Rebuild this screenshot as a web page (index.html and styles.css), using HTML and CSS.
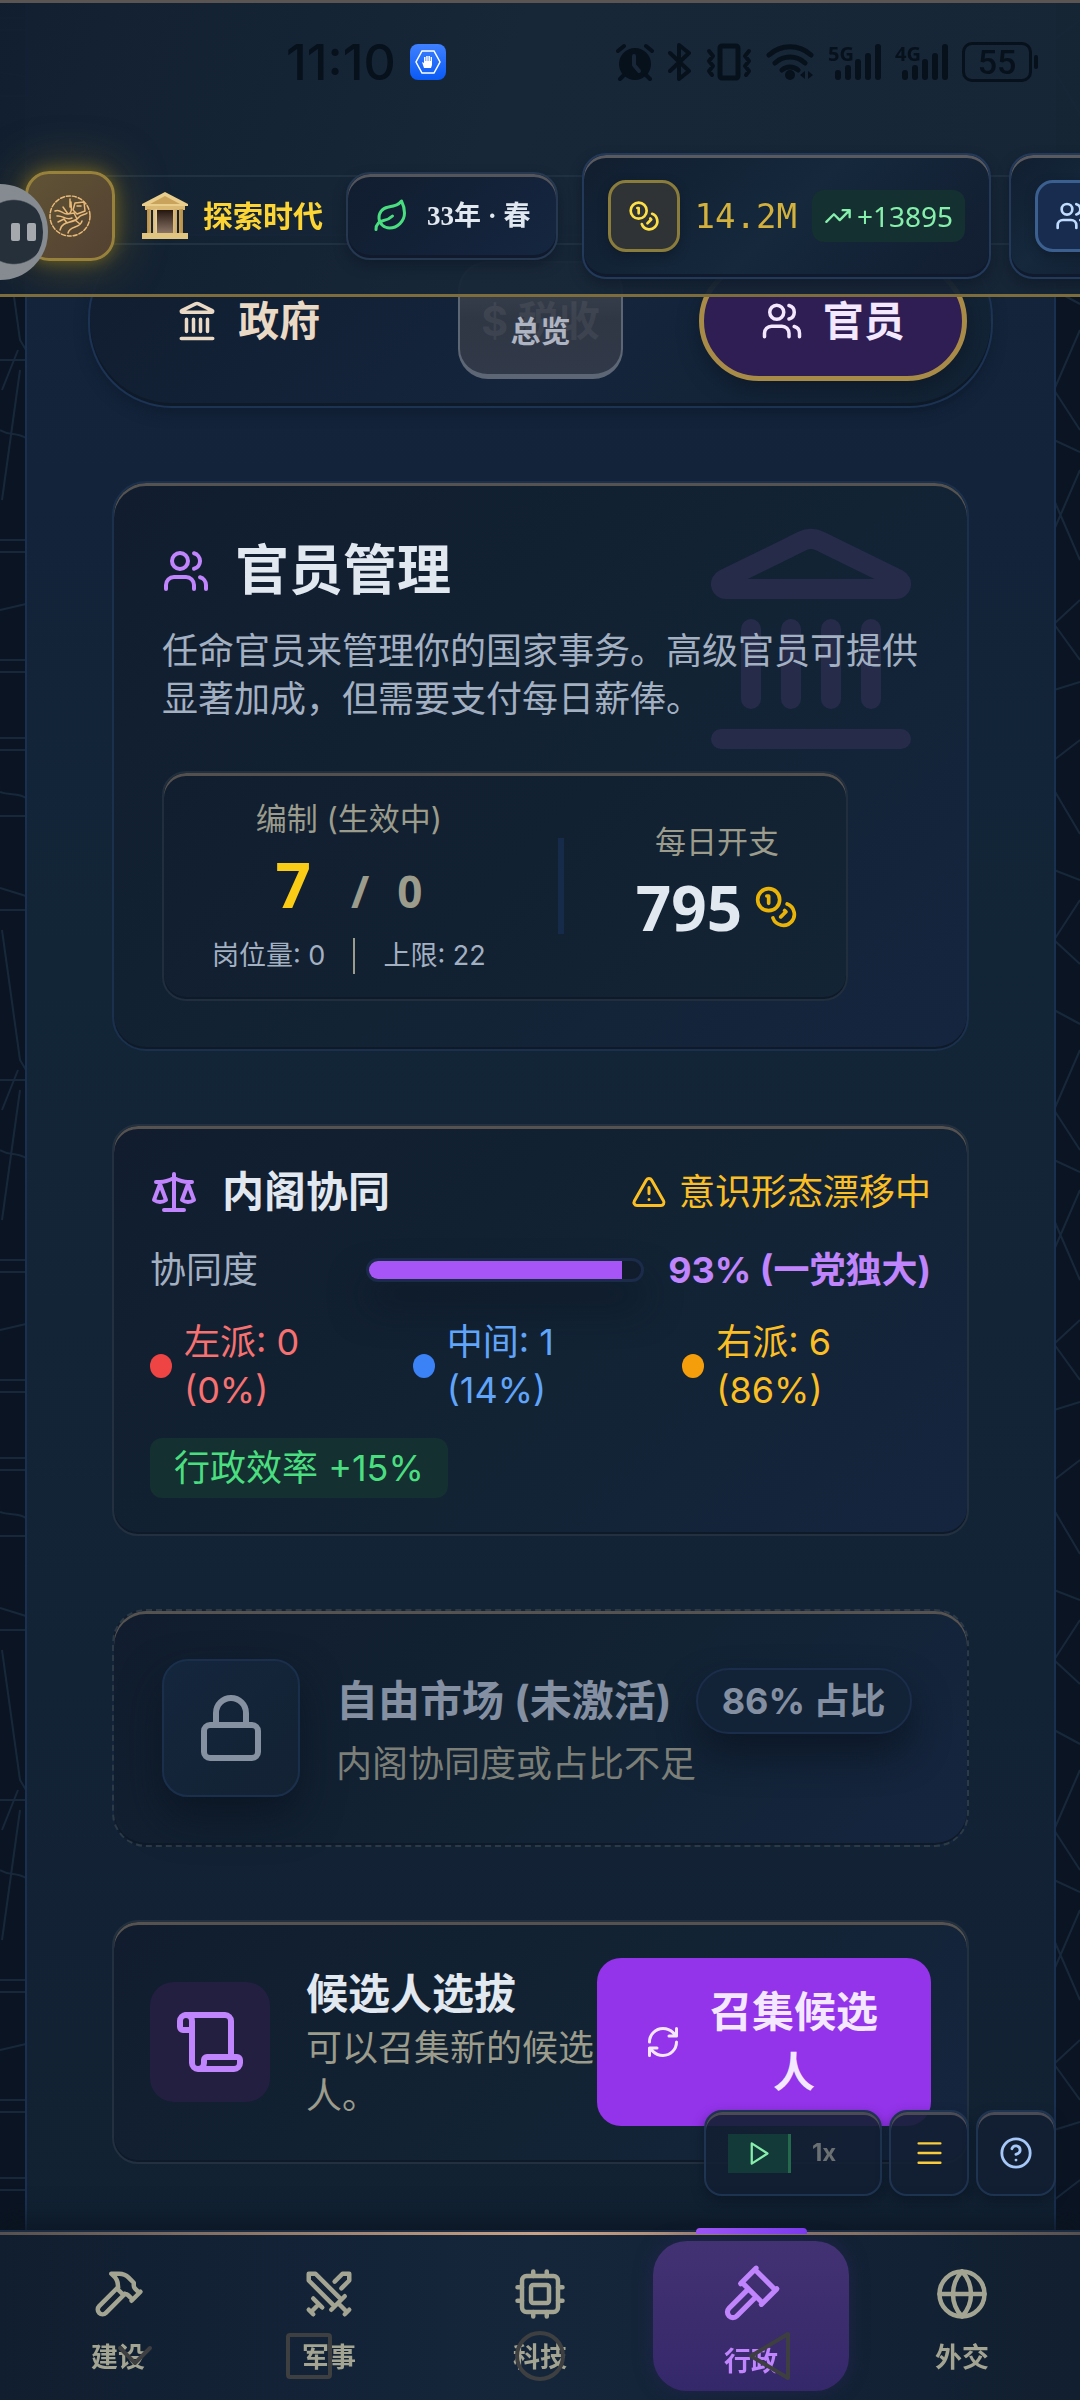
FILE: index.html
```html
<!DOCTYPE html>
<html lang="zh-CN">
<head>
<meta charset="utf-8">
<meta name="viewport" content="width=device-width, initial-scale=1">
<title>官员管理</title>
<link rel="stylesheet" href="styles.css">
</head>
<body>
<svg class="sprite" aria-hidden="true">
  <symbol id="i-landmark" viewBox="0 0 24 24"><path d="M11.119 2.205a2 2 0 0 1 1.762 0l7.84 3.846A.5.5 0 0 1 20.5 7h-17a.5.5 0 0 1-.22-.949zM6 18v-7M10 18v-7M14 18v-7M18 18v-7M3 22h18"/></symbol>
  <symbol id="i-users" viewBox="0 0 24 24"><path d="M16 21v-2a4 4 0 0 0-4-4H6a4 4 0 0 0-4 4v2"/><circle cx="9" cy="7" r="4"/><path d="M22 21v-2a4 4 0 0 0-3-3.87M16 3.13a4 4 0 0 1 0 7.75"/></symbol>
  <symbol id="i-coins" viewBox="0 0 24 24"><circle cx="8" cy="8" r="6"/><path d="M18.09 10.37A6 6 0 1 1 10.34 18M7 6h1v4M16.71 13.88l.7.71-2.82 2.82"/></symbol>
  <symbol id="i-leaf" viewBox="0 0 24 24"><path d="M11 20A7 7 0 0 1 9.8 6.1C15.5 5 17 4.48 19 2c1 2 2 4.18 2 8 0 5.5-4.78 10-10 10Z"/><path d="M2 21c0-3 1.85-5.36 5.08-6C9.5 14.52 12 13 13 12"/></symbol>
  <symbol id="i-trend" viewBox="0 0 24 24"><path d="M22 7l-8.5 8.5-5-5L2 17M16 7h6v6"/></symbol>
  <symbol id="i-scale" viewBox="0 0 24 24"><path d="M16 16l3-8 3 8c-.87.65-1.92 1-3 1s-2.13-.35-3-1ZM2 16l3-8 3 8c-.87.65-1.92 1-3 1s-2.13-.35-3-1ZM7 21h10M12 3v18M3 7h2c2 0 5-1 7-2 2 1 5 2 7 2h2"/></symbol>
  <symbol id="i-alert" viewBox="0 0 24 24"><path d="M21.73 18l-8-14a2 2 0 0 0-3.48 0l-8 14A2 2 0 0 0 4 21h16a2 2 0 0 0 1.73-3M12 9v4M12 17h.01"/></symbol>
  <symbol id="i-lock" viewBox="0 0 24 24"><rect x="3" y="11" width="18" height="11" rx="2"/><path d="M7 11V7a5 5 0 0 1 10 0v4"/></symbol>
  <symbol id="i-scroll" viewBox="0 0 24 24"><path d="M19 17V5a2 2 0 0 0-2-2H4"/><path d="M8 21h12a2 2 0 0 0 2-2v-1a1 1 0 0 0-1-1H11a1 1 0 0 0-1 1v1a2 2 0 1 1-4 0V5a2 2 0 1 0-4 0v2a1 1 0 0 0 1 1h3"/></symbol>
  <symbol id="i-refresh" viewBox="0 0 24 24"><path d="M3 12a9 9 0 0 1 9-9 9.75 9.75 0 0 1 6.74 2.74L21 8M21 3v5h-5M21 12a9 9 0 0 1-9 9 9.75 9.75 0 0 1-6.74-2.74L3 16M8 16H3v5"/></symbol>
  <symbol id="i-hammer" viewBox="0 0 24 24"><path d="M15 12l-8.373 8.373a1 1 0 1 1-3-3L12 9"/><path d="M18 15l4-4M21.5 11.5l-1.914-1.914A2 2 0 0 1 19 8.172V7l-2.26-2.26a6 6 0 0 0-4.202-1.756L9 2.96l.92.82A6.18 6.18 0 0 1 12 8.4V10l2 2h1.172a2 2 0 0 1 1.414.586L18.5 14.5"/></symbol>
  <symbol id="i-swords" viewBox="0 0 24 24"><path d="M14.5 17.5L3 6V3h3l11.5 11.5M13 19l6-6M16 16l4 4M19 21l2-2M14.5 6.5L18 3h3v3l-3.5 3.5M5 14l4 4M7 17l-3 3M3 19l2 2"/></symbol>
  <symbol id="i-cpu" viewBox="0 0 24 24"><rect x="4" y="4" width="16" height="16" rx="2"/><rect x="8" y="8" width="8" height="8" rx="1"/><path d="M15 2v2M15 20v2M2 15h2M2 9h2M20 15h2M20 9h2M9 2v2M9 20v2"/></symbol>
  <symbol id="i-gavel" viewBox="0 0 24 24"><path d="M14 13l-7.5 7.5c-.83.83-2.17.83-3 0a2.12 2.12 0 0 1 0-3L11 10M16 16l6-6M21.5 10.5l-8-8M8 8l6-6M8.5 7.5l8 8"/></symbol>
  <symbol id="i-globe" viewBox="0 0 24 24"><circle cx="12" cy="12" r="10"/><path d="M12 2a14.5 14.5 0 0 0 0 20 14.5 14.5 0 0 0 0-20M2 12h20"/></symbol>
  <symbol id="i-play" viewBox="0 0 24 24"><path d="M6 3l14 9-14 9z"/></symbol>
  <symbol id="i-menu" viewBox="0 0 24 24"><path d="M3 4h18M3 12h18M3 20h18"/></symbol>
  <symbol id="i-help" viewBox="0 0 24 24"><circle cx="12" cy="12" r="10"/><path d="M9.09 9a3 3 0 0 1 5.83 1c0 2-3 3-3 3M12 17h.01"/></symbol>
  <symbol id="i-signal" viewBox="0 0 46 36"><path d="M3 33v-4M13 33v-9M23 33V18M33 33V12M43 33V3" stroke-width="6"/></symbol>
</svg>

<header class="topbar">
  <div class="status">
    <div class="status-left">
      <span class="clock">11:10</span>
      <svg class="app-badge" viewBox="0 0 36 36"><defs><linearGradient id="g-app" x2="0" y2="1"><stop stop-color="#3f80ff"/><stop offset="1" stop-color="#0a5af5"/></linearGradient></defs><rect width="36" height="36" rx="8" fill="url(#g-app)"/><path d="M12 7h12l6 11-6 11H12L6 18z" fill="none" stroke="#fff" stroke-width="1.5"/><path d="M14 24l-2-6 2 1v-6h1.5v4h.7v-5h1.5v5h.7v-5h1.5v5h.7v-4H22v8l-1 3z" fill="#fff"/></svg>
    </div>
    <div class="status-right">
      <svg class="st-alarm" viewBox="0 0 38 38"><circle cx="19" cy="21" r="16" fill="currentColor" stroke="none"/><path d="M2 8l6-5M36 8l-6-5M8 32l-4 4M30 32l4 4" stroke-width="4"/><path d="M18 13v9l5 6" stroke="#182637" stroke-width="4"/></svg>
      <svg class="st-bt" viewBox="0 0 24 38"><path d="M2 10l19 18-10 8V2l10 8L2 28" stroke-width="4"/></svg>
      <svg class="st-vib" viewBox="0 0 46 38"><rect x="14" y="3" width="18" height="32" rx="2" stroke-width="5"/><path d="M3 8l4 5-4 5 4 5-4 5 3 4M43 8l-4 5 4 5-4 5 4 5-3 4" stroke-width="4"/></svg>
      <svg class="st-wifi" viewBox="0 0 48 38"><path d="M3 12a31 31 0 0 1 42 0M9 20a22 22 0 0 1 30 0M16 27a12 12 0 0 1 16 0" stroke-width="5"/><circle cx="24" cy="32" r="5" fill="currentColor" stroke="none"/><path d="M34 32l5-4v8zM42 28v8l5-4z" fill="currentColor" stroke="none"/></svg>
      <span class="net"><span class="net-label">5G</span><svg class="st-signal"><use href="#i-signal"/></svg></span>
      <span class="net"><span class="net-label">4G</span><svg class="st-signal"><use href="#i-signal"/></svg></span>
      <span class="battery">55</span>
    </div>
  </div>

  <div class="hud">
    <button class="crest" aria-label="国徽">
      <svg viewBox="0 0 44 44"><circle cx="22" cy="22" r="20" stroke-dasharray="4 2"/><path d="M7 17c5-3 8 4 13 3s3-7 3-12M9 22c6-1 9 5 15 2M27 9l9-1 1 9-8 3-4-4zM29 12h4M12 36c2-10 14-6 18-12 3-4 7-3 9-5M20 39c2-8 12-4 14-12M15 13l5 7 6-1 3 6M10 28l6-3 3 4 8-3 5 4M22 5v8"/></svg>
    </button>
    <div class="era">
      <svg class="temple" viewBox="0 0 46 48"><defs><linearGradient id="g-col"><stop stop-color="#b98f45"/><stop offset=".4" stop-color="#fff0bf"/><stop offset="1" stop-color="#b98f45"/></linearGradient><linearGradient id="g-door" x2="0" y2="1"><stop stop-color="#20130d"/><stop offset="1" stop-color="#8b7466"/></linearGradient></defs><path d="M12 17h22v24H12z" fill="url(#g-door)"/><path d="M23 0l23 12v2H0v-2z" fill="#e8cd8c"/><path d="M23 4l15 8H8z" fill="#c9a35c"/><path d="M3 14h40v4H3z" fill="#d9b974"/><path d="M5 17h4v24H5zM11 17h4v24h-4zM31 17h4v24h-4zM37 17h4v24h-4z" fill="url(#g-col)"/><path d="M0 41h46v6H0z" fill="#e0c581"/></svg>
      <span class="era-name">探索时代</span>
    </div>
    <div class="season">
      <svg class="icon"><use href="#i-leaf"/></svg>
      <span>33年 · 春</span>
    </div>
    <div class="resource">
      <span class="resource-icon gold"><svg class="icon"><use href="#i-coins"/></svg></span>
      <span class="resource-value">14.2M</span>
      <span class="resource-delta"><svg class="icon"><use href="#i-trend"/></svg>+13895</span>
    </div>
    <div class="resource">
      <span class="resource-icon blue"><svg class="icon"><use href="#i-users"/></svg></span>
    </div>
  </div>
  <button class="assist" aria-label="悬浮助手"><span></span><span></span></button>
</header>

<svg class="chart-lines" aria-hidden="true" width="100%" height="100%">
  <defs><pattern id="p-map" width="1080" height="720" patternUnits="userSpaceOnUse"><g fill="none" stroke="#1d3145" stroke-width="2"><path d="M0 18h26M0 30h26M0 72c10 4 18 0 26 6M0 96h26M0 168l26 8M0 190h26M2 210l18 130 6 10M2 390l16-40M2 500l18-130M0 360h26M0 430c10 6 16 2 26 8M0 540h26M0 552h26M0 610l26-6M0 660h26M0 672h26"/><path d="M1080 20l-26 20M1054 70l26 44M1054 150l26 10M1080 180l-26 40 26 24M1054 290l26 14M1080 330l-26 60 26 40M1054 440l26 12M1080 470l-26 60M1054 500l26 60M1080 600l-26 24 26 36M1054 690l26-8"/></g></pattern></defs>
  <rect width="100%" height="100%" fill="url(#p-map)"/>
</svg>

<main class="panel">
  <nav class="tabs">
    <button class="tab"><svg class="icon"><use href="#i-landmark"/></svg>政府</button>
    <button class="tab tab-ghost"><span class="ghost-under">$ 税收</span><span class="ghost-over">总览</span></button>
    <button class="tab tab-active"><svg class="icon"><use href="#i-users"/></svg>官员</button>
  </nav>

  <section class="card card-lg intro">
    <svg class="icon watermark"><use href="#i-landmark"/></svg>
    <h2 class="intro-title"><svg class="icon"><use href="#i-users"/></svg>官员管理</h2>
    <p class="intro-text">任命官员来管理你的国家事务。高级官员可提供显著加成，但需要支付每日薪俸。</p>
    <div class="stats">
      <div class="stat">
        <span class="stat-label">编制 (生效中)</span>
        <span class="stat-value"><span class="used">7</span><span class="cap"><span>/</span><span>0</span></span></span>
        <span class="stat-note"><span>岗位量: 0</span><span>上限: 22</span></span>
      </div>
      <div class="divider"></div>
      <div class="stat">
        <span class="stat-label">每日开支</span>
        <span class="stat-value cost">795<svg class="icon"><use href="#i-coins"/></svg></span>
      </div>
    </div>
  </section>

  <section class="card synergy">
    <div class="synergy-head">
      <h3><svg class="icon"><use href="#i-scale"/></svg>内阁协同</h3>
      <span class="drift"><svg class="icon"><use href="#i-alert"/></svg>意识形态漂移中</span>
    </div>
    <div class="synergy-meter">
      <span class="meter-label">协同度</span>
      <div class="meter" role="progressbar" aria-valuenow="93" aria-label="协同度"><div class="meter-fill" style="width:93%"></div></div>
      <strong>93% (一党独大)</strong>
    </div>
    <ul class="factions">
      <li class="left"><i></i><span>左派: 0<br>(0%)</span></li>
      <li class="center"><i></i><span>中间: 1<br>(14%)</span></li>
      <li class="right"><i></i><span>右派: 6<br>(86%)</span></li>
    </ul>
    <span class="bonus">行政效率 +15%</span>
  </section>

  <section class="card card-lg locked">
    <span class="lock-box"><svg class="icon"><use href="#i-lock"/></svg></span>
    <div class="locked-body">
      <h3>自由市场 (未激活)<span class="share">86% 占比</span></h3>
      <p>内阁协同度或占比不足</p>
    </div>
  </section>

  <section class="card recruit">
    <span class="scroll-box"><svg class="icon"><use href="#i-scroll"/></svg></span>
    <div class="recruit-body">
      <h3>候选人选拔</h3>
      <p>可以召集新的候选人。</p>
    </div>
    <button class="summon"><svg class="icon"><use href="#i-refresh"/></svg><span>召集候选人</span></button>
  </section>
</main>

<div class="controls">
  <div class="speed">
    <button class="play" aria-label="继续"><svg class="icon"><use href="#i-play"/></svg></button>
    <button class="rate">1x</button>
  </div>
  <button class="square menu" aria-label="菜单"><svg class="icon"><use href="#i-menu"/></svg></button>
  <button class="square help" aria-label="帮助"><svg class="icon"><use href="#i-help"/></svg></button>
</div>

<nav class="dock">
  <a href="#build"><svg class="icon"><use href="#i-hammer"/></svg>建设</a>
  <a href="#military"><svg class="icon"><use href="#i-swords"/></svg>军事</a>
  <a href="#tech"><svg class="icon"><use href="#i-cpu"/></svg>科技</a>
  <a href="#politics" class="current"><svg class="icon"><use href="#i-gavel"/></svg>行政</a>
  <a href="#diplomacy"><svg class="icon"><use href="#i-globe"/></svg>外交</a>
</nav>

<div class="system-keys" aria-hidden="true">
  <svg viewBox="0 0 50 50"><path d="M10 17l15 15 15-15"/></svg>
  <svg viewBox="0 0 50 50"><rect x="4" y="4" width="42" height="42" rx="2"/></svg>
  <svg viewBox="0 0 50 50"><circle cx="25" cy="25" r="23"/></svg>
  <svg viewBox="0 0 50 50"><path d="M43 3v44L6 25z"/></svg>
</div>
</body>
</html>
```

FILE: styles.css
```css
:root {
  --ink: #e2e8f0;
  --muted: #a3b0c2;
  --khaki: #9b9c8c;
  --purple: #c084fc;
  --gold: #fbbf24;
  --edge: #1b304c;
  --shine: #55524f;
  --card: linear-gradient(135deg, #111d2e 0%, #122334 55%, #15253f 100%);
}

* { box-sizing: border-box; }

body {
  margin: 0;
  min-height: 100vh;
  display: flex;
  flex-direction: column;
  overflow-x: hidden;
  background: #0b1422;
  color: var(--ink);
  font: 36px/48px Inter, "Noto Sans CJK SC", sans-serif;
}

h2, h3, p, ul { margin: 0; padding: 0; }
ul { list-style: none; }
button { font: inherit; color: inherit; border: 0; padding: 0; background: none; }

.sprite { position: absolute; width: 0; height: 0; }

.icon, .status-right svg, .crest svg, .system-keys svg {
  flex: none;
  fill: none;
  stroke: currentColor;
  stroke-width: 2;
  stroke-linecap: round;
  stroke-linejoin: round;
}

.chart-lines { position: fixed; inset: 0; opacity: .7; }

/* Top bar */
.topbar {
  position: fixed;
  inset: 0 0 auto;
  z-index: 3;
  overflow: hidden;
  border-top: 3px solid #5a5452;
  border-bottom: 3px solid #7d6c3c;
  background: linear-gradient(110deg, #121f31f2 0%, #172737f2 45%, #172636f2 100%);
}

.status {
  display: flex;
  justify-content: space-between;
  align-items: center;
  height: 132px;
  padding: 0 48px 14px 286px;
  color: #07111c;
}
.status-left, .status-right { display: flex; align-items: center; }
.status-left { gap: 14px; }
.status-right { gap: 14px; }
.clock { font: 500 50px/48px Inter, sans-serif; }
.app-badge { width: 36px; height: 36px; }
.status-right svg { height: 38px; }
.status-right .st-alarm { width: 38px; }
.status-right .st-bt { width: 24px; }
.status-right .st-vib { width: 46px; }
.status-right .st-wifi { width: 48px; }
.net { position: relative; display: flex; padding-left: 7px; }
.net-label { position: absolute; left: 0; top: 0; font: 700 20px/20px "Open Sans", sans-serif; }
.status-right .st-signal { width: 46px; height: 36px; }
.battery {
  position: relative;
  width: 70px;
  height: 40px;
  border: 3px solid;
  border-radius: 10px;
  text-align: center;
  font: 500 34px/34px Roboto, sans-serif;
}
.battery::after {
  content: "";
  position: absolute;
  left: 69px;
  top: 10px;
  width: 4px;
  height: 14px;
  border-radius: 2px;
  background: currentColor;
}

.hud {
  position: relative;
  display: flex;
  align-items: center;
  gap: 25px;
  height: 159px;
  padding: 3px 0 0 25px;
}
.hud::before {
  content: "";
  position: absolute;
  left: 70px;
  right: 0;
  top: 40px;
  height: 66px;
  border: solid #203142;
  border-width: 2px 0;
}
.hud > * { position: relative; flex: none; }
.crest {
  display: grid;
  place-items: center;
  width: 90px;
  height: 90px;
  border: 3px solid #98813a;
  border-radius: 24px;
  background: linear-gradient(135deg, #5f5335, #544132);
  box-shadow: 0 0 48px #8f761e99, 0 0 16px #8f761e99;
}
.crest svg { width: 44px; height: 44px; color: #e9b978; stroke-width: 1.5; }
.era { display: flex; align-items: center; gap: 15px; margin-left: 2px; }
.temple { width: 46px; height: 48px; }
.era-name { color: #fcd535; font-size: 30px; font-weight: 700; }
.season {
  display: flex;
  align-items: center;
  gap: 18px;
  height: 88px;
  padding: 0 25px;
  margin-left: -2px;
  border: 2px solid #25384f;
  border-radius: 24px;
  background: linear-gradient(135deg, #111d2f, #152640);
  box-shadow: inset 0 3px 0 #55555c, inset 0 -3px 0 #101a2c, 0 6px 12px #0b142280;
  font: 700 27px/40px "Liberation Serif", "Noto Sans CJK SC", serif;
  white-space: nowrap;
}
.season .icon { width: 36px; height: 36px; color: #4ade80; }
.resource {
  display: flex;
  align-items: center;
  gap: 15px;
  height: 126px;
  padding: 0 24px;
  border: 2px solid #22395a;
  border-radius: 24px;
  background: linear-gradient(135deg, #111e30, #15283c 50%, #121d30);
  box-shadow: inset 0 3px 0 #5a5a5e, inset 0 -3px 0 #101a2c, 0 6px 12px #0b142280;
}
.season + .resource { margin-left: -1px; }
.resource + .resource { margin-left: -7px; }
.resource-icon {
  display: grid;
  place-items: center;
  width: 72px;
  height: 72px;
  border: 3px solid #8a7c3a;
  border-radius: 18px;
  background: #2f3336;
  box-shadow: 0 4px 10px #0b142280;
}
.resource-icon .icon { width: 32px; height: 32px; }
.gold { color: #fddf47; }
.blue { color: #bfdbfe; border-color: #3b608f; background: #182c50; }
.resource-value { color: #d3b13c; font: 34px/48px "DejaVu Sans Mono", monospace; }
.resource-delta {
  display: flex;
  align-items: center;
  gap: 5px;
  height: 52px;
  padding: 0 12px;
  border-radius: 12px;
  background: #143030;
  color: #86efac;
  font: 28px/52px "Noto Sans", sans-serif;
}
.resource-delta .icon { width: 28px; height: 28px; }

.assist {
  position: absolute;
  left: -48px;
  top: 181px;
  display: flex;
  justify-content: flex-end;
  align-items: center;
  gap: 7px;
  width: 96px;
  height: 96px;
  padding-right: 7px;
  border: 5px solid #858b90;
  border-radius: 50%;
  background: radial-gradient(circle at 66% 50%, #26303a 0 44%, #858b90 46%);
}
.assist span { width: 9px; height: 18px; border-radius: 2px; background: #a5a9ad; }

/* Page panel */
.panel {
  position: relative;
  flex: 1;
  display: flex;
  flex-direction: column;
  gap: 73px;
  margin: 0 24px 0 25px;
  padding: 234px 85px;
  border: solid #1a3050;
  border-width: 0 2px;
  background: linear-gradient(180deg, #14273c 0%, #13233a 20%, #122536 40%, #132336 70%, #112131 100%);
}

.tabs {
  display: grid;
  grid-template-columns: repeat(3, 1fr);
  gap: 24px;
  height: 174px;
  margin: 0 -24px;
  padding: 25px 24px;
  border: 2px solid #1c3354;
  border-radius: 84px;
  background: linear-gradient(135deg, #111d30, #14253c 55%, #122334);
  box-shadow: inset 0 -3px 0 #0f1a29, 0 6px 14px #0b142266;
}
.tab {
  display: flex;
  align-items: center;
  justify-content: center;
  gap: 20px;
  border-radius: 60px;
  color: #ead9c5;
  font-size: 41px;
  font-weight: 700;
  white-space: nowrap;
}
.tab .icon { width: 42px; height: 42px; }
.tab-active {
  border: 5px solid #a98b48;
  background: #2f1e54;
  color: #f3e8ff;
  box-shadow: 0 8px 20px #0b142299;
}
.tab-ghost { position: relative; }
.ghost-under { color: #6c7480; }
.ghost-over {
  position: absolute;
  inset: 0 52px 2px;
  display: flex;
  align-items: center;
  justify-content: center;
  padding-top: 24px;
  border: 2px solid #5d6674;
  border-bottom-width: 5px;
  border-radius: 30px;
  background: linear-gradient(180deg, #464b56d9, #343a46d9 50%, #363d4bd9);
  color: #aeb4c1;
  font-size: 30px;
  font-weight: 700;
}

/* Cards */
.card {
  padding: 36px;
  border: 2px solid #22303f;
  border-radius: 26px;
  background: var(--card);
  box-shadow: inset 0 3px 0 var(--shine), inset 0 -2px 0 #0f1a29;
}
.card-lg { padding: 48px; border-radius: 34px; }
.card h3 { font-size: 42px; line-height: 60px; font-weight: 700; white-space: nowrap; }

.intro { position: relative; border-color: var(--edge); }
.watermark {
  position: absolute;
  top: 36px;
  right: 36px;
  width: 240px;
  height: 240px;
  color: #262b4a;
}
.intro-title {
  position: relative;
  display: flex;
  align-items: center;
  gap: 25px;
  margin-bottom: 16px;
  font-size: 54px;
  line-height: 80px;
}
.intro-title .icon { width: 48px; height: 48px; color: var(--purple); }
.intro-text { position: relative; margin-bottom: 48px; color: var(--muted); }
.stats {
  display: flex;
  align-items: center;
  gap: 72px;
  width: fit-content;
  padding: 25px 48px;
  border: 2px solid #202e3d;
  border-radius: 24px;
  background: linear-gradient(135deg, #111e2f, #132435);
  box-shadow: inset 0 3px 0 #54504e, inset 0 -2px 0 #0f1a29;
}
.stat { display: flex; flex-direction: column; align-items: center; }
.stat-label { color: var(--khaki); font-size: 31px; line-height: 42px; }
.stat-value {
  display: flex;
  align-items: center;
  gap: 40px;
  height: 88px;
  font: 700 62px/88px "Noto Sans", sans-serif;
}
.used { color: #facc15; }
.cap { display: flex; gap: 28px; padding-top: 13px; color: var(--khaki); font-size: 44px; }
.cost { gap: 12px; }
.cost .icon { width: 44px; height: 44px; color: #eab308; }
.stat-note {
  display: flex;
  margin-top: 10px;
  color: var(--muted);
  font-size: 27px;
  line-height: 36px;
}
.stat-note span + span { margin-left: 28px; padding-left: 28px; border-left: 2px solid var(--khaki); }
.divider { width: 6px; height: 96px; background: #162b49; }

.synergy { display: flex; flex-direction: column; gap: 24px; }
.synergy-head { display: flex; justify-content: space-between; align-items: center; }
.synergy-head h3 { display: flex; align-items: center; gap: 24px; }
.synergy-head h3 .icon { width: 48px; height: 48px; color: var(--purple); }
.drift { display: flex; align-items: center; gap: 12px; color: var(--gold); white-space: nowrap; }
.drift .icon { width: 36px; height: 36px; }
.synergy-meter { display: flex; align-items: center; gap: 24px; }
.synergy-meter strong { color: var(--purple); white-space: nowrap; }
.meter-label { width: 192px; color: var(--muted); }
.meter {
  flex: 1;
  height: 24px;
  overflow: hidden;
  border: 3px solid #1b2b4a;
  border-radius: 12px;
  background: #111c2c;
  box-shadow: 0 24px 36px #0b142299;
}
.meter-fill { height: 100%; background: #a855f7; }
.factions { display: grid; grid-template-columns: 239fr 246fr 249fr; gap: 24px; }
.factions li { display: flex; align-items: center; gap: 12px; }
.factions i { width: 22px; height: 24px; border-radius: 50%; }
.left { color: #f87171; }
.left i { background: #ef4444; }
.center { color: #60a5fa; }
.center i { background: #3b82f6; }
.right { color: var(--gold); }
.right i { background: #f59e0b; }
.bonus {
  align-self: flex-start;
  padding: 6px 24px;
  border-radius: 12px;
  background: #143030;
  color: #4ade80;
}

.locked { display: flex; align-items: center; gap: 36px; border: 2px dashed #2b3a46; }
.lock-box, .scroll-box { display: grid; place-items: center; flex: none; }
.lock-box {
  width: 138px;
  height: 138px;
  border: 2px solid #1a2f4b;
  border-radius: 26px;
  background: linear-gradient(135deg, #14263d, #132233);
  box-shadow: 0 20px 40px #0a131fb3;
  color: #8590a0;
}
.lock-box .icon, .scroll-box .icon { width: 72px; height: 72px; }
.locked-body { flex: 1; }
.locked h3 { display: flex; align-items: center; gap: 24px; margin-bottom: 6px; color: #8490a2; }
.locked p { color: #7b7f77; }
.share {
  padding: 7px 24px;
  border: 2px solid #1a2d4a;
  border-radius: 33px;
  background: #132337;
  box-shadow: 0 20px 36px #0a131fb3;
  font-size: 36px;
  line-height: 48px;
}

.recruit { display: flex; align-items: center; }
.scroll-box { width: 120px; height: 120px; border-radius: 24px; background: #231f40; color: var(--purple); }
.recruit-body { flex: 1; margin-left: 36px; }
.recruit p { color: var(--khaki); }
.summon {
  display: flex;
  align-items: center;
  gap: 24px;
  width: 334px;
  padding: 24px 48px;
  border-radius: 24px;
  background: #9333ea;
  color: #f3e8ff;
  font-size: 42px;
  line-height: 60px;
  font-weight: 700;
}
.summon .icon { width: 36px; height: 36px; }

/* Floating game controls */
.controls {
  position: fixed;
  right: 24px;
  bottom: 204px;
  z-index: 2;
  display: flex;
  gap: 7px;
}
.speed, .square {
  display: flex;
  align-items: center;
  height: 86px;
  border: 2px solid #1f3450;
  border-radius: 18px;
  background: #131f33e6;
  box-shadow: inset 0 3px 0 #4b4b56, 0 6px 12px #0b142299;
}
.speed { gap: 21px; width: 178px; padding-left: 22px; }
.square { justify-content: center; width: 80px; }
.play {
  display: grid;
  place-items: center;
  width: 63px;
  height: 39px;
  border-right: 3px solid #25694c;
  background: #133a38;
  color: #86efac;
}
.play .icon { width: 27px; height: 27px; }
.rate { color: #6b7072; font: 700 24px/36px Inter, sans-serif; }
.menu { color: #facc3c; }
.menu .icon { width: 29px; height: 32px; }
.help { color: #a5c8f8; }
.help .icon { width: 34px; height: 34px; }

/* Bottom navigation */
.dock {
  position: fixed;
  inset: auto 0 0;
  z-index: 2;
  display: grid;
  grid-template-columns: repeat(5, 1fr);
  gap: 15px;
  height: 170px;
  padding: 9px 20px;
  border-top: 2px solid #1b2b42;
  background: linear-gradient(90deg, #111e30, #15263b 50%, #111f30);
  box-shadow: 0 -8px 24px #0a131fcc;
}
.dock::before {
  content: "";
  position: absolute;
  inset: 0 0 auto;
  height: 3px;
  background: linear-gradient(90deg, #55504f, #c9a286 50%, #55504f);
}
.dock a {
  position: relative;
  display: flex;
  flex-direction: column;
  align-items: center;
  justify-content: center;
  gap: 14px;
  padding-top: 16px;
  border-radius: 34px;
  color: #a3a592;
  font-size: 27px;
  line-height: 46px;
  font-weight: 700;
  text-decoration: none;
}
.dock .icon { width: 54px; height: 54px; }
.dock .current {
  background: linear-gradient(180deg, #433273, #35286a);
  color: var(--purple);
  box-shadow: 0 0 18px #2d256080;
}
.dock .current .icon { width: 62px; height: 62px; }
.dock .current::before {
  content: "";
  position: absolute;
  top: -13px;
  width: 111px;
  height: 6px;
  border-radius: 4px 4px 0 0;
  background: linear-gradient(90deg, #9d55f5, #7c3aed);
}

.system-keys {
  position: fixed;
  left: 110px;
  right: 285px;
  bottom: 19px;
  z-index: 3;
  display: grid;
  grid-template-columns: 174fr 231fr 230fr 50px;
  pointer-events: none;
  color: #3e3f40;
}
.system-keys svg { width: 50px; height: 50px; stroke-width: 4; }
```
